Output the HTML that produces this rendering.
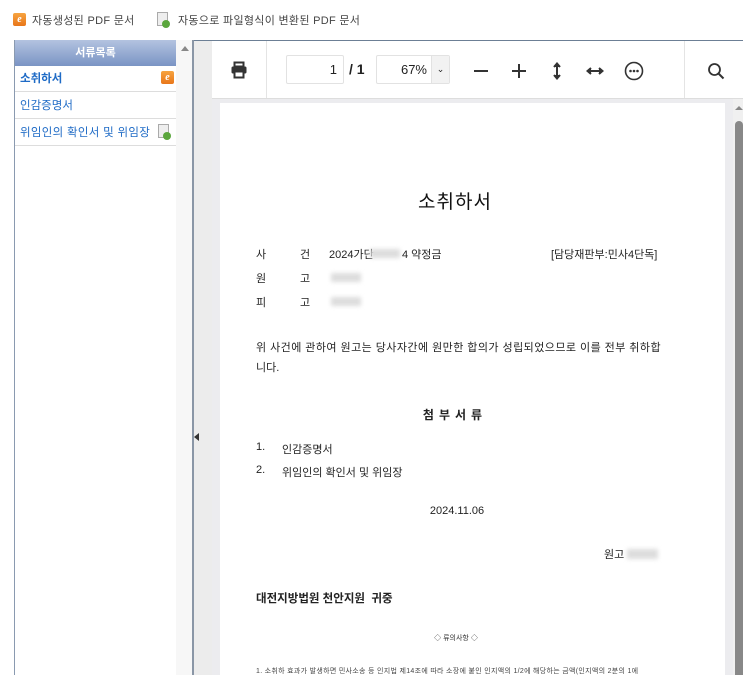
<!DOCTYPE html>
<html><head><meta charset="utf-8"><style>
*{margin:0;padding:0;box-sizing:border-box}
body{width:743px;height:675px;overflow:hidden;background:#fff;font-family:"Liberation Sans","Noto Sans CJK KR",sans-serif;position:relative;color:#333}
.a{position:absolute;white-space:nowrap}
.ico{position:absolute;width:13px;height:13px;border-radius:2px;background:linear-gradient(#f7a440,#e8761a);color:#fff;font:italic bold 10px "Liberation Serif",serif;text-align:center;line-height:13px}
.doc{position:absolute;width:11px;height:14px;background:#eee;border:1px solid #aaa}
.doc::after{content:"";position:absolute;right:-3px;bottom:-3px;width:8px;height:8px;border-radius:50%;background:#5aa63c}
.blur{position:absolute;background:#ddd;filter:blur(2px);height:9px}
.t{font-size:11px;color:#222}
</style></head><body>
<div class="ico" style="left:13px;top:13px">e</div>
<div class="a" style="left:32px;top:12px;font-size:11px;color:#444;letter-spacing:0.3px">자동생성된 PDF 문서</div>
<div class="doc" style="left:157px;top:12px"></div>
<div class="a" style="left:178px;top:12px;font-size:11px;color:#444;letter-spacing:0.3px">자동으로 파일형식이 변환된 PDF 문서</div>

<div class="a" style="left:14px;top:40px;width:1px;height:635px;background:#8a9ab0"></div>
<div class="a" style="left:15px;top:40px;width:161px;height:26px;background:linear-gradient(#b3c3e0,#7a94c4);color:#fff;font-size:11px;font-weight:bold;text-align:center;line-height:26px">서류목록</div>
<div class="a" style="left:20px;top:70px;font-size:11.5px;font-weight:bold;color:#1f6bc6">소취하서</div>
<div class="ico" style="left:161px;top:71px">e</div>
<div class="a" style="left:15px;top:91px;width:161px;height:1px;background:#ddd"></div>
<div class="a" style="left:20px;top:97px;font-size:11.5px;color:#1f6bc6">인감증명서</div>
<div class="a" style="left:15px;top:118px;width:161px;height:1px;background:#ddd"></div>
<div class="a" style="left:20px;top:124px;font-size:11.5px;color:#1f6bc6;letter-spacing:0.3px">위임인의 확인서 및 위임장</div>
<div class="doc" style="left:158px;top:124px"></div>
<div class="a" style="left:15px;top:145px;width:161px;height:1px;background:#ddd"></div>
<div class="a" style="left:176px;top:40px;width:16px;height:635px;background:#f7f7f7"></div>
<div class="a" style="left:181px;top:46px;width:0;height:0;border-left:4px solid transparent;border-right:4px solid transparent;border-bottom:5px solid #888"></div>
<div class="a" style="left:192px;top:40px;width:2px;height:635px;background:#8a96a6"></div>
<div class="a" style="left:194px;top:40px;width:18px;height:635px;background:#ececec"></div>
<div class="a" style="left:194px;top:433px;width:0;height:0;border-top:4px solid transparent;border-bottom:4px solid transparent;border-right:5px solid #333"></div>

<div class="a" style="left:194px;top:40px;width:549px;height:1px;background:#6c7f95"></div>
<div class="a" style="left:212px;top:41px;width:531px;height:58px;background:#fff;border-bottom:1px solid #ddd"></div>
<div class="a" style="left:266px;top:41px;width:1px;height:57px;background:#e4e4e4"></div>
<div class="a" style="left:684px;top:41px;width:1px;height:57px;background:#e4e4e4"></div>
<svg class="a" style="left:230px;top:61px" width="18" height="18" viewBox="0 0 18 18"><rect x="4.5" y="1.5" width="9" height="4" fill="none" stroke="#333" stroke-width="2"/><rect x="1.5" y="5.5" width="15" height="7" rx="1.5" fill="#333"/><rect x="4.5" y="10.5" width="9" height="6" fill="#fff" stroke="#333" stroke-width="2"/></svg>
<div class="a" style="left:286px;top:55px;width:58px;height:29px;border:1px solid #e2e2e2;border-radius:2px;font-size:13px;text-align:right;padding-right:6px;line-height:27px;color:#222">1</div>
<div class="a" style="left:349px;top:61px;font-size:14px;color:#222;font-weight:bold">/ 1</div>
<div class="a" style="left:376px;top:55px;width:74px;height:29px;border:1px solid #e2e2e2;border-radius:2px;font-size:13px;line-height:27px;color:#222"><span style="position:absolute;right:22px">67%</span><span style="position:absolute;right:0;top:0;width:18px;height:27px;background:#f2f2f2;border-left:1px solid #e2e2e2;font-size:9px;text-align:center">⌄</span></div>
<div class="a" style="left:474px;top:70px;width:14px;height:2px;background:#333"></div>
<div class="a" style="left:512px;top:70px;width:14px;height:2px;background:#333"></div>
<div class="a" style="left:518px;top:64px;width:2px;height:14px;background:#333"></div>
<svg class="a" style="left:552px;top:62px" width="10" height="18" viewBox="0 0 10 18"><path d="M5 2V16M2 5L5 1.5L8 5M2 13L5 16.5L8 13" stroke="#333" stroke-width="2" fill="#333"/></svg>
<svg class="a" style="left:586px;top:66px" width="18" height="10" viewBox="0 0 18 10"><path d="M2 5H16M5 2L1.5 5L5 8M13 2L16.5 5L13 8" stroke="#333" stroke-width="2" fill="#333"/></svg>
<svg class="a" style="left:624px;top:61px" width="20" height="20" viewBox="0 0 20 20"><circle cx="10" cy="10" r="8.5" fill="none" stroke="#333" stroke-width="1.6"/><circle cx="6.5" cy="10" r="1.3" fill="#333"/><circle cx="10" cy="10" r="1.3" fill="#333"/><circle cx="13.5" cy="10" r="1.3" fill="#333"/></svg>
<svg class="a" style="left:707px;top:62px" width="18" height="18" viewBox="0 0 18 18"><circle cx="7.5" cy="7.5" r="5.5" fill="none" stroke="#333" stroke-width="1.8"/><path d="M11.5 11.5L16.5 16.5" stroke="#333" stroke-width="2"/></svg>

<div class="a" style="left:212px;top:99px;width:531px;height:576px;background:#ececef"></div>
<div class="a" style="left:220px;top:103px;width:505px;height:572px;background:#fff"></div>
<div class="a" style="left:733px;top:99px;width:10px;height:576px;background:#f0f0f0"></div>
<div class="a" style="left:735px;top:106px;width:0;height:0;border-left:4px solid transparent;border-right:4px solid transparent;border-bottom:4px solid #888"></div>
<div class="a" style="left:735px;top:121px;width:8px;height:554px;background:#888;border-radius:4px 4px 0 0"></div>

<div class="a" style="left:0;width:910px;text-align:center;top:187px;font-size:19px;color:#111;letter-spacing:1px">소취하서</div>
<div class="a t" style="left:256px;top:246px">사</div><div class="a t" style="left:300px;top:246px">건</div>
<div class="a t" style="left:329px;top:246px">2024가단</div><div class="blur" style="left:370px;top:249px;width:30px"></div><div class="a t" style="left:402px;top:246px">4 약정금</div>
<div class="a t" style="left:551px;top:246px">[담당재판부:민사4단독]</div>
<div class="a t" style="left:256px;top:270px">원</div><div class="a t" style="left:300px;top:270px">고</div><div class="blur" style="left:331px;top:273px;width:30px"></div>
<div class="a t" style="left:256px;top:294px">피</div><div class="a t" style="left:300px;top:294px">고</div><div class="blur" style="left:331px;top:297px;width:30px"></div>
<div class="a t" style="left:256px;top:339px;letter-spacing:0.45px">위 사건에 관하여 원고는 당사자간에 원만한 합의가 성립되었으므로 이를 전부 취하합</div>
<div class="a t" style="left:256px;top:359px">니다.</div>
<div class="a" style="left:0;width:910px;text-align:center;top:406px;font-size:12px;font-weight:bold;color:#222;letter-spacing:5px">첨부서류</div>
<div class="a t" style="left:256px;top:441px">1.</div><div class="a t" style="left:282px;top:441px">인감증명서</div>
<div class="a t" style="left:256px;top:464px">2.</div><div class="a t" style="left:282px;top:464px">위임인의 확인서 및 위임장</div>
<div class="a t" style="left:0;width:914px;text-align:center;top:505px">2024.11.06</div>
<div class="a t" style="left:604px;top:546px">원고</div><div class="blur" style="left:627px;top:549px;width:31px;height:10px"></div>
<div class="a" style="left:256px;top:590px;font-size:11.5px;font-weight:bold;color:#222">대전지방법원 천안지원 &nbsp;귀중</div>
<div class="a" style="left:0;width:912px;text-align:center;top:633px;font-size:7px;color:#333">◇ 류의사항 ◇</div>
<div class="a" style="left:256px;top:666px;font-size:7px;color:#444;letter-spacing:0.3px">1. 소취하 효과가 발생하면 민사소송 등 인지법 제14조에 따라 소장에 붙인 인지액의 1/2에 해당하는 금액(인지액의 2분의 1에</div>
</body></html>
